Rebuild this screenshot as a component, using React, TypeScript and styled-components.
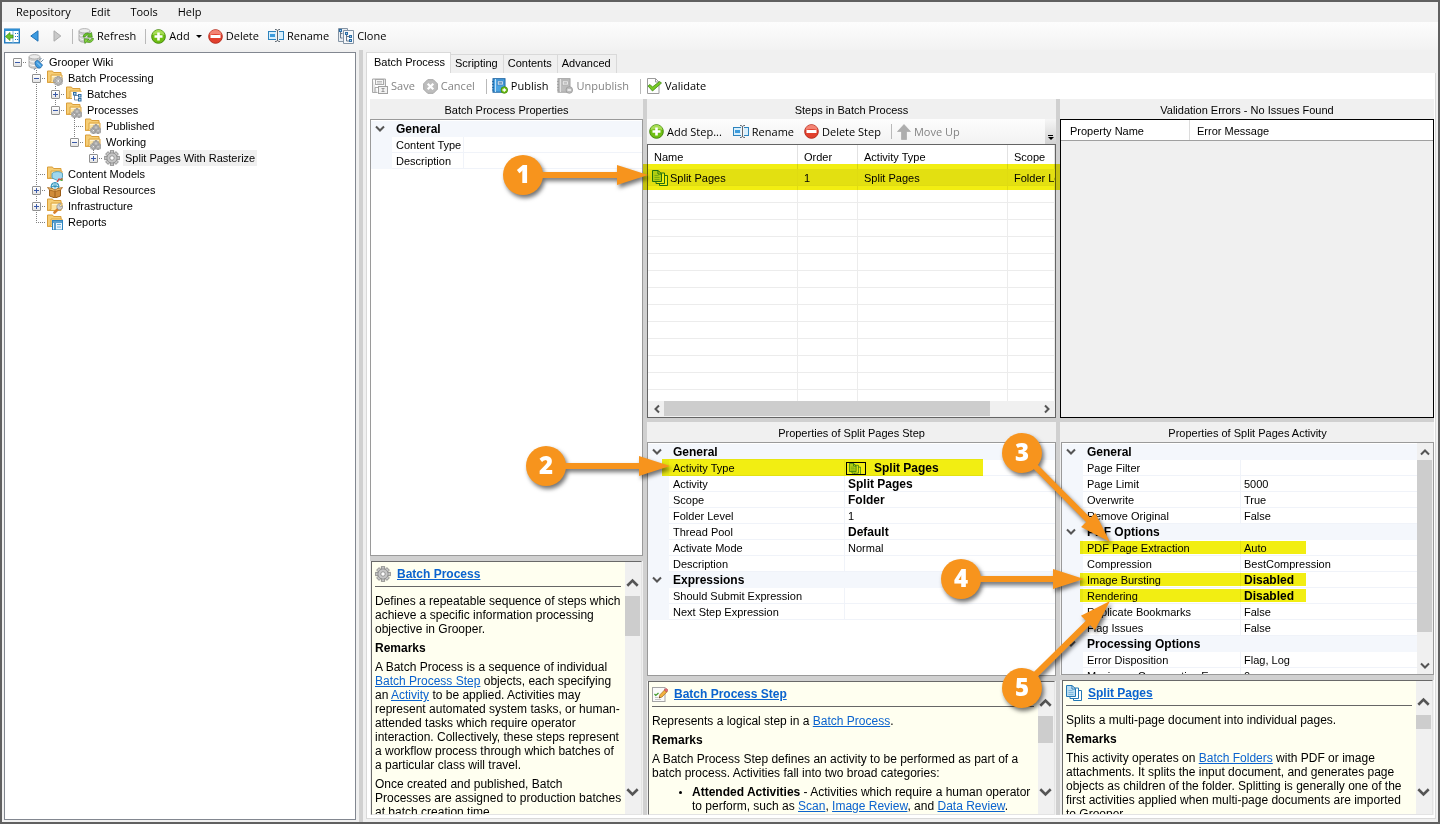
import React from 'react';
import styled, { createGlobalStyle, css } from 'styled-components';

const UI = '"Liberation Sans", Arial, sans-serif';
const MENU = '"Open Sans", "Segoe UI", sans-serif';
const ACCENT = '#f7941d';

const GlobalStyle = createGlobalStyle`
  *, *::before, *::after { box-sizing: border-box; }
  body { margin: 0; background: #f0f0f0; font: 11px/16px ${UI}; color: #000; }
  button { margin: 0; padding: 0; border: 0; background: none; font: inherit; color: inherit; }
  table { border-collapse: separate; border-spacing: 0; table-layout: fixed; width: 100%; }
  th, td { padding: 0; font-weight: normal; text-align: left; white-space: nowrap; overflow: hidden; }
  svg { display: block; flex: none; }
`;

/* ---------- window frame ---------- */

const Window = styled.div`
  position: relative;
  display: flex;
  flex-direction: column;
  height: 100vh;
  min-height: 600px;
  border: 2px solid #606060;
  background: #f0f0f0;
  overflow: hidden;
`;

const MenuBar = styled.nav`
  display: flex;
  flex: none;
  height: 20px;
  padding-left: 4px;
  font: 11px/18px ${MENU};
`;

const MenuItem = styled.button`
  padding: 0 10px;
`;

const ToolBar = styled.div<{ $height: number; $flat?: boolean }>`
  display: flex;
  align-items: center;
  flex: none;
  height: ${(p) => p.$height}px;
  padding-left: 2px;
  background: ${(p) => (p.$flat ? '#fff' : 'linear-gradient(#fdfdfd, #f2f2f2)')};
  font: 11px/16px ${MENU};
  white-space: nowrap;
`;

const ToolButton = styled.button<{ $gap?: number }>`
  display: flex;
  align-items: center;
  gap: 3px;
  margin-right: ${(p) => p.$gap ?? 9}px;
  &:disabled { color: #838383; }
`;

const Divider = styled.i`
  width: 1px;
  height: 15px;
  margin-right: 5px;
  background: #b9b9b9;
`;

const Caret = styled.i`
  border: 3px solid transparent;
  border-top-color: #000;
  border-bottom: 0;
  margin-left: 3px;
`;

const Workspace = styled.div`
  display: flex;
  flex: 1;
  min-height: 0;
`;

/* ---------- node tree ---------- */

const TreePane = styled.div`
  flex: none;
  width: 352px;
  margin: 2px 3px 2px 2px;
  padding: 1px 0 0 3px;
  border: 1px solid #828790;
  background: #fff;
`;

const TreeRow = styled.div`
  display: flex;
  align-items: center;
  height: 16px;
  > svg { margin-left: 1px; }
`;

type Guide = 'none' | 'line' | 'tee' | 'end' | 'root';

const dotsV = 'repeating-linear-gradient(#808080 0 1px, transparent 1px 2px)';
const dotsH = 'repeating-linear-gradient(90deg, #808080 0 1px, transparent 1px 2px)';

const GuideCell = styled.span<{ $kind: Guide }>`
  display: grid;
  place-items: center;
  flex: none;
  width: 19px;
  height: 16px;
  background-repeat: no-repeat;
  ${(p) => p.$kind === 'line' && css`background-image: ${dotsV}; background-position: 9px 0; background-size: 1px 16px;`}
  ${(p) => p.$kind === 'tee' && css`background-image: ${dotsV}, ${dotsH}; background-position: 9px 0, 9px 8px; background-size: 1px 16px, 10px 1px;`}
  ${(p) => p.$kind === 'end' && css`background-image: ${dotsV}, ${dotsH}; background-position: 9px 0, 9px 8px; background-size: 1px 8px, 10px 1px;`}
  ${(p) => p.$kind === 'root' && css`background-image: ${dotsH}; background-position: 9px 8px; background-size: 10px 1px;`}
`;

const Expander = styled.button<{ $open: boolean }>`
  width: 9px;
  height: 9px;
  border: 1px solid #919191;
  border-radius: 1px;
  background:
    linear-gradient(#3b5aa8, #3b5aa8) center / 5px 1px no-repeat,
    linear-gradient(#3b5aa8, #3b5aa8) center / 1px ${(p) => (p.$open ? 0 : 5)}px no-repeat,
    linear-gradient(#fff, #e4e4e4);
`;

const TreeLabel = styled.span<{ $selected?: boolean }>`
  margin-left: 3px;
  padding: 0 2px;
  background: ${(p) => (p.$selected ? '#f0f0f0' : 'transparent')};
`;

/* ---------- tabs and panes ---------- */

const Splitter = styled.div`
  flex: none;
  width: 4px;
  background: #d0d0d0;
`;

const Editor = styled.div`
  display: flex;
  flex-direction: column;
  flex: 1;
  min-width: 0;
  margin: 2px 2px 3px 3px;
`;

const TabStrip = styled.div`
  display: flex;
  flex: none;
  align-items: flex-end;
  height: 21px;
`;

const Tab = styled.button<{ $active?: boolean }>`
  height: ${(p) => (p.$active ? 21 : 19)}px;
  padding: ${(p) => (p.$active ? '0 5px 2px 7px' : '0 5px 2px 4px')};
  border: 1px solid #d9d9d9;
  border-bottom: 0;
  border-left-width: ${(p) => (p.$active ? 1 : 0)}px;
  background: ${(p) => (p.$active ? '#fff' : '#f0f0f0')};
`;

const TabPage = styled.div`
  display: flex;
  flex-direction: column;
  flex: 1;
  min-height: 0;
  padding: 0 1px 3px 3px;
  border: 1px solid #d9d9d9;
  border-top: 0;
  background: #fff;
`;

const Columns = styled.div`
  display: grid;
  grid-template-columns: minmax(0, 273fr) 4px minmax(0, 409fr) 4px minmax(0, 374fr);
  flex: 1;
  min-height: 0;
`;

const Column = styled.div<{ $rows: string }>`
  display: grid;
  grid-template-rows: ${(p) => p.$rows};
  min-height: 0;
  background: #f0f0f0;
`;

const Bar = styled.div`
  background: #d0d0d0;
`;

const Pane = styled.section<{ $inset?: number }>`
  display: flex;
  flex-direction: column;
  min-height: 0;
  min-width: 0;
  overflow: hidden;
  padding-left: ${(p) => p.$inset ?? 0}px;
`;

const PaneTitle = styled.h2`
  flex: none;
  height: 20px;
  margin: 0;
  font: 11px/22px ${UI};
  text-align: center;
`;

/* ---------- property grid ---------- */

const GridBox = styled.div`
  display: flex;
  flex: 1;
  min-height: 0;
  border: 1px solid #9a9a9a;
  background: #fff;
`;

const GridScroll = styled.div<{ $top?: number }>`
  flex: 1;
  min-width: 0;
  overflow: hidden;
  padding-top: ${(p) => p.$top ?? 0}px;
`;

const GutterCell = styled.td`
  height: 16px;
  background: #f4f7fc;
`;

const SectionCell = styled.th`
  && { font-weight: bold; }
  height: 16px;
  padding: 1px 0 0 4px;
  background: #f4f7fc;
  font-size: 12px;
  line-height: 15px;
`;

const NameCell = styled.th`
  height: 16px;
  padding: 1px 0 0 4px;
  line-height: 15px;
  box-shadow: inset -1px -1px #f0f3f9;
`;

const ValueCell = styled.td<{ $strong?: boolean; $swatch?: boolean }>`
  height: 16px;
  padding: 1px 0 0 ${(p) => (p.$swatch ? 1 : 3)}px;
  line-height: 15px;
  box-shadow: inset 0 -1px #f0f3f9;
  ${(p) => p.$strong && css`font-weight: bold; font-size: 12px;`}
`;

const Swatched = styled.span`
  display: flex;
  align-items: center;
  gap: 8px;
  height: 15px;
`;

const Swatch = styled.span`
  display: grid;
  place-items: center;
  width: 20px;
  height: 13px;
  border: 1px solid #000;
  overflow: hidden;
`;

const Chevron = styled.button`
  display: grid;
  place-items: center;
  width: 18px;
  height: 16px;
`;

/* ---------- steps list and error list ---------- */

const ListBox = styled.div`
  display: flex;
  flex-direction: column;
  flex: 1;
  min-height: 0;
  border: 1px solid #646464;
  background: #fff;
`;

const ListHead = styled.th`
  height: 24px;
  padding-left: 6px;
  border-right: 1px solid #e2e2e2;
`;

const ListCell = styled.td<{ $selected?: boolean }>`
  height: 17px;
  padding: 1px 0 0 6px;
  line-height: 16px;
  box-shadow: inset -1px -1px #ececec;
  background: ${(p) => (p.$selected ? '#f0f0f0' : '#fff')};
`;

const StepName = styled.span`
  display: flex;
  align-items: center;
  gap: 2px;
  margin-left: -2px;
  height: 16px;
`;

const ErrorBox = styled.div`
  flex: 1;
  border: 1px solid #000;
  background: #f0f0f0;
`;

const ErrorHead = styled.th`
  height: 21px;
  padding: 1px 0 0 9px;
  border-bottom: 1px solid #a0a0a0;
  background: #fff;
  & + & { padding-left: 8px; box-shadow: inset 1px 0 #dcdcdc; }
`;

const Overflow = styled.button`
  display: flex;
  flex-direction: column;
  align-items: center;
  justify-content: flex-end;
  gap: 1px;
  align-self: stretch;
  width: 11px;
  margin-left: auto;
  padding-bottom: 4px;
  background: linear-gradient(#f6f6f6, #d2d2d2);
  &::before { content: ''; width: 5px; height: 1px; background: #000; }
  &::after { content: ''; border: 3px solid transparent; border-top-color: #000; border-bottom: 0; }
`;

/* ---------- scroll bars ---------- */

const VTrack = styled.div<{ $help?: boolean }>`
  display: flex;
  flex-direction: column;
  flex: none;
  width: 16px;
  padding: ${(p) => (p.$help ? '12px 1px 14px 0' : '1px 1px 0 0')};
  background: #f0f0f0;
`;

const HTrack = styled.div`
  display: flex;
  flex: none;
  height: 16px;
  padding: 0 1px 1px;
  background: #f0f0f0;
`;

const ArrowButton = styled.button`
  display: grid;
  place-items: center;
  flex: none;
  min-width: 15px;
  height: 16px;
`;

const Slide = styled.div<{ $row?: boolean; $help?: boolean }>`
  display: flex;
  flex-direction: ${(p) => (p.$row ? 'row' : 'column')};
  flex: 1;
  min-height: 0;
  padding: ${(p) => (p.$help ? '6px 0' : '0')};
`;

const Thumb = styled.div<{ $share: number }>`
  flex: 0 0 ${(p) => p.$share}%;
  background: #cdcdcd;
`;

/* ---------- help panes ---------- */

const HelpBox = styled.div`
  display: flex;
  flex: 1;
  min-height: 0;
  margin: 0 1px;
  border: 1px solid #e3e3e3;
  border-top-color: #696969;
  border-left-color: #696969;
  background: #fffff0;
`;

const HelpText = styled.div`
  flex: 1;
  min-width: 0;
  overflow: hidden;
  padding: 0 3px;
  font: 12px/14px ${UI};
  p { margin: 0 0 5px; }
  ul { margin: 0; padding-left: 40px; }
  li::marker { font-size: 10px; }
`;

const HelpHead = styled.header`
  display: flex;
  align-items: center;
  gap: 6px;
  height: 25px;
  margin: 0 1px 7px 0;
  border-bottom: 1px solid #666;
  font-weight: bold;
`;

const Link = styled.a`
  color: #0b63ce;
  text-decoration: underline;
`;

/* ---------- callouts ---------- */

const Marker = styled.div<{ $x: number; $y: number; $w: number; $h: number }>`
  position: absolute;
  left: ${(p) => p.$x}px;
  top: ${(p) => p.$y}px;
  width: ${(p) => p.$w}px;
  height: ${(p) => p.$h}px;
  background: #f2ee12;
  mix-blend-mode: multiply;
  pointer-events: none;
`;

const Arrows = styled.svg`
  position: absolute;
  left: 0;
  top: 0;
  pointer-events: none;
  filter: drop-shadow(2px 3px 2px rgba(0, 0, 0, 0.55));
`;

const Badge = styled.span<{ $x: number; $y: number }>`
  position: absolute;
  left: ${(p) => p.$x - 20}px;
  top: ${(p) => p.$y - 20}px;
  width: 40px;
  height: 40px;
  border-radius: 50%;
  color: #fff;
  font: 800 24px/38px "Open Sans", sans-serif;
  text-align: center;
`;

/* ---------- icons ---------- */

const Svg = ({ children, w = 16, h = 16 }: { children: React.ReactNode; w?: number; h?: number }) => (
  <svg width={w} height={h} viewBox={`0 0 ${w} ${h}`} fill="none" aria-hidden="true">{children}</svg>
);

const Cog = ({ cx, cy, r, fill = '#c2c2c2', stroke = '#969696' }: { cx: number; cy: number; r: number; fill?: string; stroke?: string }) => (
  <g>
    {[0, 45, 90, 135].map((a) => (
      <rect key={a} x={cx - r * 0.24} y={cy - r} width={r * 0.48} height={r * 2} fill={fill} stroke={stroke} strokeWidth="0.7" transform={`rotate(${a} ${cx} ${cy})`} />
    ))}
    <circle cx={cx} cy={cy} r={r * 0.7} fill={fill} stroke={stroke} strokeWidth="0.6" />
    <circle cx={cx} cy={cy} r={r * 0.3} fill="#fff" stroke={stroke} strokeWidth="0.7" />
  </g>
);

const CogIcon = () => <Svg><Cog cx={8} cy={8} r={7.3} fill="#c6c6c6" stroke="#777" /></Svg>;

const FolderShape = () => (
  <g>
    <path d="M.5 12.500v-11.500h5l1 1.500h7.500v10z" fill="#f6cd74" stroke="#d99e3a" />
    <path d="M.8 12.500l3.200-1V5h11v5.500l-2 2z" fill="#fde3a0" stroke="#dda645" />
    <path d="M5 6.500h9" stroke="#fff3cf" />
  </g>
);

const FolderCog = () => <Svg><FolderShape /><Cog cx={11.2} cy={11} r={4.6} /></Svg>;
const FolderCogs = () => (
  <Svg><FolderShape /><Cog cx={8.500} cy={12.500} r={3.2} /><Cog cx={13} cy={12.500} r={3.200} /><Cog cx={11} cy={9.500} r={3} /></Svg>
);
const FolderBatches = () => (
  <Svg>
    <FolderShape />
    <rect x="6" y="6" width="10" height="10" fill="#fff" />
    <path d="M8.500 8v6h4M8.500 9.500h4" stroke="#7a8fa8" />
    <rect x="7.500" y="6.500" width="2.500" height="2.500" fill="#bfe0f5" stroke="#2f6ea5" />
    <rect x="12.500" y="8.500" width="2.500" height="2.500" fill="#bfe0f5" stroke="#2f6ea5" />
    <rect x="12.500" y="12.500" width="2.500" height="2.500" fill="#bfe0f5" stroke="#2f6ea5" />
  </Svg>
);
const FolderModels = () => (
  <Svg>
    <FolderShape />
    <path d="M5 7.500c3-2.500 8-2.500 10.500 0v4l-4 3.500-6.500-3z" fill="#9fd7ef" stroke="#3d93b8" strokeWidth=".8" />
    <path d="M10 16l2-3 3 1v-2" stroke="#df3d32" strokeWidth="1.200" />
    <path d="M13 15l2.500-3v3z" fill="#53b545" />
  </Svg>
);
const FolderWrench = () => (
  <Svg>
    <FolderShape />
    <path d="M7.500 14.500l4.500-4.500" stroke="#d9822b" strokeWidth="2.600" strokeLinecap="round" />
    <path d="M10 10c-.6-3 1.500-5 4-4.300l-1.700 1.800 1 1.300 2.400-1c.3 2.700-2 4.500-4.200 4z" fill="#d2d2d2" stroke="#8a8a8a" strokeWidth=".7" />
  </Svg>
);
const FolderReports = () => (
  <Svg>
    <FolderShape />
    <rect x="5.500" y="6.500" width="10" height="9.500" fill="#e8f5fd" stroke="#2d83bd" />
    <path d="M6 8h9M8 9v7" stroke="#2d83bd" strokeWidth="1.500" />
    <path d="M10 10.500h4M10 13h4" stroke="#6aaeda" />
  </Svg>
);
const ResourcesIcon = () => (
  <Svg>
    <circle cx="8" cy="4.500" r="4" fill="#c9ebf7" stroke="#2b8db5" />
    <path d="M4 4.500h8M8 .5v6M5.500 2c2 3 3 3 5 0" stroke="#2b8db5" strokeWidth=".8" />
    <path d="M2.500 8h11v6l-5.500 2-5.500-2z" fill="#d08c3a" stroke="#9a5c18" />
    <path d="M2.500 8L.5 5.500 6 6.500l2 2 2-2 5.500-1-2 2.500L8 9.500z" fill="#edb868" stroke="#a6661d" strokeWidth=".8" />
    <path d="M8 9.500V16" stroke="#9a5c18" />
  </Svg>
);
const Cylinder = () => (
  <g>
    <path d="M1 3v9c0 3 11 3 11 0V3" fill="#cfcfcf" stroke="#9a9a9a" strokeWidth=".8" />
    <path d="M1.500 6.500c1.500 2 8.500 2 10 0M1.500 10c1.500 2 8.500 2 10 0" stroke="#fff" />
    <ellipse cx="6.500" cy="2.800" rx="5.500" ry="2.200" fill="#ececec" stroke="#a5a5a5" strokeWidth=".8" />
  </g>
);
const RepositoryIcon = () => (
  <Svg>
    <Cylinder />
    <path d="M7 8l2.500-2 5 5-1.500 2.500c-3 2-6-1-6-5.500z" fill="#3e9be0" stroke="#1d62a5" strokeWidth=".8" />
    <path d="M13 8l2.500-2.500M11 6.500l2.500-2.500M7.500 14L6 16" stroke="#6b88a5" />
    <path d="M9 8.500l4 4" stroke="#a8d6f7" />
  </Svg>
);
const RefreshIcon = () => (
  <Svg>
    <Cylinder />
    <path d="M5 9c.5-3.500 4-5 7-3l1.500-1.500.8 4.800-4.800-.3 1.400-1.400C9 6.500 7.500 7.500 7 9z" fill="#6cc32c" stroke="#3c8a12" strokeWidth=".7" />
    <path d="M15.500 10.500c-.5 3.500-4 5-7 3.300L7 15.500 6 10.800l5 .2-1.500 1.500c2 1 3.500 0 4-2z" fill="#84d23e" stroke="#3c8a12" strokeWidth=".7" />
  </Svg>
);
const HomePaneIcon = () => (
  <Svg>
    <rect x=".7" y="1.200" width="14.600" height="13.600" fill="#fff" stroke="#1f7ac0" strokeWidth="1.400" />
    <path d="M0 2h16" stroke="#2f8fd4" strokeWidth="2" />
    <path d="M9 3v12" stroke="#7fb6dc" />
    <path d="M1.500 8.500L6 4.500v2.500h3v3H6v2.500z" fill="#6cc52b" stroke="#3c8a12" strokeWidth=".7" />
    <path d="M11 5.500h3M11 8.500h3M11 11.500h3" stroke="#1f7ac0" strokeDasharray="1 1" />
  </Svg>
);
const BackIcon = () => <Svg w={9} h={12}><path d="M8 .8v10.400L.8 6z" fill="#3c9be2" stroke="#2373b5" /></Svg>;
const ForwardIcon = () => <Svg w={9} h={12}><path d="M1 .8v10.400L7.800 6z" fill="#c9c9c9" stroke="#ababab" /></Svg>;
const AddIcon = () => (
  <Svg w={15} h={15}>
    <circle cx="7.500" cy="7.500" r="6.800" fill="#6fbf12" stroke="#43890b" />
    <path d="M1.500 6a6 5 0 0 1 12 0c-4-1.500-8-1.500-12 0z" fill="#a7dd55" />
    <path d="M7.500 3.500v8M3.500 7.500h8" stroke="#fff" strokeWidth="2.600" />
  </Svg>
);
const DeleteIcon = () => (
  <Svg w={15} h={15}>
    <circle cx="7.500" cy="7.500" r="6.800" fill="#e2402d" stroke="#b62c1e" />
    <path d="M1.500 6a6 5 0 0 1 12 0c-4-1.500-8-1.500-12 0z" fill="#f38474" />
    <rect x="2.500" y="6" width="10" height="3" fill="#fff" />
  </Svg>
);
const RenameIcon = () => (
  <Svg>
    <rect x=".5" y="3.500" width="15" height="8" fill="#d8effc" stroke="#2d83bd" />
    <rect x="2" y="6" width="5" height="3" fill="#3d9bdc" />
    <rect x="8" y="3" width="3" height="9" fill="#f4f4f4" />
    <path d="M7 1.500c1.500 0 2.500.3 2.500 1.500 0-1.200 1-1.500 2.500-1.500M9.500 3v9.500M7 13.500c1.500 0 2.500-.3 2.500-1.500 0 1.200 1 1.500 2.500 1.500" stroke="#5c6670" />
  </Svg>
);
const CloneIcon = () => (
  <Svg>
    <path d="M.5.500h9v13h-9z" fill="#e8edf2" stroke="#8494a5" />
    <path d="M5.500 2.500h10v13h-10z" fill="#f7f9fb" stroke="#8494a5" />
    <path d="M2.500 2v8h2M2.500 5.500h2M8.500 5v8h3M8.500 8.500h3" stroke="#66788c" />
    <rect x="1.500" y="1.500" width="2" height="2" fill="#9ecff0" stroke="#2f6ea5" />
    <rect x="7.500" y="4.500" width="2" height="2" fill="#9ecff0" stroke="#2f6ea5" />
    <rect x="11.500" y="7.500" width="2" height="2" fill="#9ecff0" stroke="#2f6ea5" />
    <rect x="11.500" y="11.500" width="2" height="2" fill="#9ecff0" stroke="#2f6ea5" />
  </Svg>
);
const SaveIcon = () => (
  <Svg>
    <path d="M.5 1h13v7M.5 1v13.500h5" stroke="#a9a9a9" fill="#e9e9e9" />
    <rect x="3.500" y="1.500" width="8" height="5" fill="#f7f7f7" stroke="#a9a9a9" />
    <path d="M5 3.500h5M5 5h5" stroke="#bcbcbc" />
    <path d="M3 14V9.500h4" stroke="#a9a9a9" />
    <rect x="6.500" y="8.500" width="9" height="7" fill="#f2f2f2" stroke="#a0a0a0" />
    <path d="M9.500 10.500h3M11 10.500v3M9.500 13.500h3" stroke="#999" />
  </Svg>
);
const CancelIcon = () => (
  <Svg w={15} h={15}>
    <path d="M4.700.7h5.600l4 4v5.600l-4 4H4.700l-4-4V4.700z" fill="#bdbdbd" stroke="#a6a6a6" />
    <path d="M4.700 4.700l5.600 5.600M10.300 4.700l-5.600 5.600" stroke="#fff" strokeWidth="2.200" />
  </Svg>
);
const BookIcon = ({ off }: { off?: boolean }) => (
  <Svg>
    <rect x="1" y=".7" width="12" height="13.500" fill={off ? '#bdbdbd' : '#4ba3e2'} stroke={off ? '#a0a0a0' : '#1c62a0'} />
    <path d="M3.500 1v13" stroke={off ? '#e4e4e4' : '#bfe0f8'} />
    <rect x="5.500" y="3" width="5.500" height="4" fill="#fff" stroke={off ? '#a8a8a8' : '#2f77b8'} strokeWidth=".6" />
    <path d="M6.500 4.300h3.500M6.500 5.800h3.500M0 3.500h2M0 6.500h2M0 9.500h2M0 12h2" stroke={off ? '#9d9d9d' : '#1c62a0'} strokeWidth=".8" />
    <circle cx="12.300" cy="12" r="3.300" fill={off ? '#bcbcbc' : '#6fbf12'} stroke={off ? '#9b9b9b' : '#43890b'} strokeWidth=".8" />
    <path d={off ? 'M10.500 12h3.600' : 'M10.500 12h3.600M12.300 10.200v3.600'} stroke="#fff" strokeWidth="1.300" />
  </Svg>
);
const ValidateIcon = () => (
  <Svg>
    <path d="M1.500.5h8l3.500 3.500v11.500H1.500z" fill="#fdfdfd" stroke="#9c9c9c" />
    <path d="M9.500.5V4H13" stroke="#9c9c9c" />
    <path d="M2 8l2-1.500L6.500 9l7-5.500L15.500 5l-9 8z" fill="#77c923" stroke="#3c8a12" strokeWidth=".8" />
  </Svg>
);
const UpIcon = () => <Svg w={14} h={16}><path d="M7 .5l6.500 7h-4v8h-5v-8h-4z" fill="#adadad" stroke="#a2a2a2" strokeWidth=".6" /></Svg>;
const PagesIcon = () => (
  <Svg>
    <path d="M7.500 5.500h8v10h-8z" fill="#fff" stroke="#2378b4" />
    <path d="M4 3h8.500v10.500h-8.500z" fill="#fff" stroke="#2378b4" />
    <path d="M.5.500H6l3.500 3.500v7.500h-9z" fill="#b9dcf1" stroke="#2378b4" />
    <path d="M6 .5V4h3.500z" fill="#fff" stroke="#2378b4" />
    <path d="M2.500 5.500h4M2.500 7.500h5M2.500 9.500h5" stroke="#7fb8dd" />
  </Svg>
);
const StepIcon = () => (
  <Svg>
    <rect x=".5" y="1.500" width="12.500" height="14" fill="#fafafa" stroke="#a5a5a5" />
    <path d="M2.500 8l1.300 1.500L6.500 7" stroke="#3d9a27" strokeWidth="1.200" />
    <path d="M3 11.500h3M3 13.500h6" stroke="#c4c4c4" />
    <path d="M7 12l1-3.300 5-5.200 2.300 2-5.300 5.500z" fill="#f2b13d" stroke="#a66d18" strokeWidth=".7" />
    <path d="M12.300 4l1.300-1.300c.8-.5 2.700 1 2 2l-1.200 1.200z" fill="#e66f78" stroke="#a83c46" strokeWidth=".6" />
    <path d="M7 12l.5-1.500 1 1z" fill="#333" />
  </Svg>
);

type Dir = 'up' | 'down' | 'left' | 'right';
const arrowPath: Record<Dir, string> = {
  up: 'M1 7.500L5 3.500l4 4', down: 'M1 2.500l4 4 4-4', left: 'M7 1.500L3.500 5 7 8.500', right: 'M3 1.500L6.500 5 3 8.500',
};
const Arrow = ({ dir, size = 10 }: { dir: Dir; size?: number }) => (
  <svg width={size} height={size} viewBox="0 0 10 10" fill="none" aria-hidden="true">
    <path d={arrowPath[dir]} stroke="#555" strokeWidth="2" />
  </svg>
);

/* ---------- data ---------- */

interface TreeNode { label: string; guides: Guide[]; icon: React.ReactNode; open?: boolean; selected?: boolean }

const nodes: TreeNode[] = [
  { label: 'Grooper Wiki', guides: ['root'], icon: <RepositoryIcon />, open: true },
  { label: 'Batch Processing', guides: ['none', 'tee'], icon: <FolderCog />, open: true },
  { label: 'Batches', guides: ['none', 'line', 'tee'], icon: <FolderBatches />, open: false },
  { label: 'Processes', guides: ['none', 'line', 'end'], icon: <FolderCogs />, open: true },
  { label: 'Published', guides: ['none', 'line', 'none', 'tee'], icon: <FolderCogs /> },
  { label: 'Working', guides: ['none', 'line', 'none', 'end'], icon: <FolderCogs />, open: true },
  { label: 'Split Pages With Rasterize', guides: ['none', 'line', 'none', 'none', 'end'], icon: <CogIcon />, open: false, selected: true },
  { label: 'Content Models', guides: ['none', 'tee'], icon: <FolderModels /> },
  { label: 'Global Resources', guides: ['none', 'tee'], icon: <ResourcesIcon />, open: false },
  { label: 'Infrastructure', guides: ['none', 'tee'], icon: <FolderWrench />, open: false },
  { label: 'Reports', guides: ['none', 'end'], icon: <FolderReports /> },
];

interface Prop { name: string; value?: string; strong?: boolean; swatch?: boolean }
interface Section { title: string; props: Prop[] }

const processProps: Section[] = [
  { title: 'General', props: [{ name: 'Content Type' }, { name: 'Description' }] },
];

const stepProps: Section[] = [
  {
    title: 'General',
    props: [
      { name: 'Activity Type', value: 'Split Pages', strong: true, swatch: true },
      { name: 'Activity', value: 'Split Pages', strong: true },
      { name: 'Scope', value: 'Folder', strong: true },
      { name: 'Folder Level', value: '1' },
      { name: 'Thread Pool', value: 'Default', strong: true },
      { name: 'Activate Mode', value: 'Normal' },
      { name: 'Description' },
    ],
  },
  { title: 'Expressions', props: [{ name: 'Should Submit Expression' }, { name: 'Next Step Expression' }] },
];

const activityProps: Section[] = [
  {
    title: 'General',
    props: [
      { name: 'Page Filter' },
      { name: 'Page Limit', value: '5000' },
      { name: 'Overwrite', value: 'True' },
      { name: 'Remove Original', value: 'False' },
    ],
  },
  {
    title: 'PDF Options',
    props: [
      { name: 'PDF Page Extraction', value: 'Auto' },
      { name: 'Compression', value: 'BestCompression' },
      { name: 'Image Bursting', value: 'Disabled', strong: true },
      { name: 'Rendering', value: 'Disabled', strong: true },
      { name: 'Replicate Bookmarks', value: 'False' },
      { name: 'Flag Issues', value: 'False' },
    ],
  },
  {
    title: 'Processing Options',
    props: [
      { name: 'Error Disposition', value: 'Flag, Log' },
      { name: 'Maximum Consecutive Errors', value: '0' },
    ],
  },
];

/* ---------- parts ---------- */

const PropertyGrid = ({ sections, nameWidth }: { sections: Section[]; nameWidth: number }) => (
  <GridScroll $top={1}>
    <table>
      <colgroup><col width={21} /><col width={nameWidth} /><col /></colgroup>
      <tbody>
        {sections.map((s) => (
          <React.Fragment key={s.title}>
            <tr>
              <GutterCell><Chevron aria-label={`Collapse ${s.title}`}><Arrow dir="down" /></Chevron></GutterCell>
              <SectionCell colSpan={2}>{s.title}</SectionCell>
            </tr>
            {s.props.map((p) => (
              <tr key={p.name}>
                <GutterCell />
                <NameCell scope="row">{p.name}</NameCell>
                <ValueCell $strong={p.strong} $swatch={p.swatch}>
                  {p.swatch ? <Swatched><Swatch><Svg w={14} h={12}><g transform="scale(.75)"><PagesIcon /></g></Svg></Swatch>{p.value}</Swatched> : p.value}
                </ValueCell>
              </tr>
            ))}
          </React.Fragment>
        ))}
      </tbody>
    </table>
  </GridScroll>
);

const VScroll = ({ share, help }: { share: number; help?: boolean }) => (
  <VTrack $help={help}>
    <ArrowButton aria-label="Scroll up"><Arrow dir="up" size={help ? 13 : 10} /></ArrowButton>
    <Slide $help={help}><Thumb $share={share} /></Slide>
    <ArrowButton aria-label="Scroll down"><Arrow dir="down" size={help ? 13 : 10} /></ArrowButton>
  </VTrack>
);

const Help = ({ icon, title, share, children }: { icon: React.ReactNode; title: string; share: number; children: React.ReactNode }) => (
  <HelpBox>
    <HelpText>
      <HelpHead>{icon}<Link href="#">{title}</Link></HelpHead>
      {children}
    </HelpText>
    <VScroll share={share} help />
  </HelpBox>
);

const Pointer = ({ from, to }: { from: [number, number]; to: [number, number] }) => {
  const length = Math.hypot(to[0] - from[0], to[1] - from[1]);
  const angle = (Math.atan2(to[1] - from[1], to[0] - from[0]) * 180) / Math.PI;
  return (
    <g transform={`translate(${from[0]} ${from[1]}) rotate(${angle})`} fill={ACCENT}>
      <circle r="20" />
      <path d={`M0-3H${length - 31}V-10L${length} 0L${length - 31} 10V3H0z`} />
    </g>
  );
};

const callouts: { from: [number, number]; to: [number, number] }[] = [
  { from: [521, 173], to: [646, 173] },
  { from: [544, 464], to: [668, 464] },
  { from: [1020, 451], to: [1108, 540] },
  { from: [959, 577], to: [1082, 577] },
  { from: [1020, 686], to: [1108, 599] },
];

const blankRows = Array.from({ length: 13 }, (_, i) => i);

export default function App() {
  return (
    <Window>
      <GlobalStyle />
      <MenuBar>
        {['Repository', 'Edit', 'Tools', 'Help'].map((m) => <MenuItem key={m}>{m}</MenuItem>)}
      </MenuBar>
      <ToolBar $height={28}>
        <ToolButton $gap={10} aria-label="Toggle tree"><HomePaneIcon /></ToolButton>
        <ToolButton $gap={14} aria-label="Back"><BackIcon /></ToolButton>
        <ToolButton $gap={10} aria-label="Forward"><ForwardIcon /></ToolButton>
        <Divider />
        <ToolButton><RefreshIcon />Refresh</ToolButton>
        <Divider />
        <ToolButton $gap={6}><AddIcon />Add<Caret /></ToolButton>
        <ToolButton><DeleteIcon />Delete</ToolButton>
        <ToolButton><RenameIcon />Rename</ToolButton>
        <ToolButton><CloneIcon />Clone</ToolButton>
      </ToolBar>
      <Workspace>
        <TreePane role="tree">
          {nodes.map((n) => (
            <TreeRow key={n.label} role="treeitem">
              {n.guides.map((g, i) => (
                <GuideCell key={i} $kind={g}>
                  {i === n.guides.length - 1 && n.open !== undefined && (
                    <Expander $open={n.open} aria-label={n.open ? 'Collapse' : 'Expand'} />
                  )}
                </GuideCell>
              ))}
              {n.icon}
              <TreeLabel $selected={n.selected}>{n.label}</TreeLabel>
            </TreeRow>
          ))}
        </TreePane>
        <Splitter />
        <Editor>
          <TabStrip role="tablist">
            <Tab role="tab" $active>Batch Process</Tab>
            <Tab role="tab">Scripting</Tab>
            <Tab role="tab">Contents</Tab>
            <Tab role="tab">Advanced</Tab>
          </TabStrip>
          <TabPage>
            <ToolBar $height={26} $flat>
              <ToolButton disabled $gap={8}><SaveIcon />Save</ToolButton>
              <ToolButton disabled $gap={11}><CancelIcon />Cancel</ToolButton>
              <Divider />
              <ToolButton><BookIcon />Publish</ToolButton>
              <ToolButton disabled $gap={11}><BookIcon off />Unpublish</ToolButton>
              <Divider />
              <ToolButton><ValidateIcon />Validate</ToolButton>
            </ToolBar>
            <Columns>
              <Column $rows="minmax(0, 457fr) 5px minmax(0, 254fr)">
                <Pane>
                  <PaneTitle>Batch Process Properties</PaneTitle>
                  <GridBox><PropertyGrid sections={processProps} nameWidth={72} /></GridBox>
                </Pane>
                <Bar />
                <Pane>
                  <Help icon={<CogIcon />} title="Batch Process" share={22}>
                    <p>Defines a repeatable sequence of steps which achieve a specific information processing objective in Grooper.</p>
                    <p><b>Remarks</b></p>
                    <p>
                      A Batch Process is a sequence of individual <Link href="#">Batch Process Step</Link> objects, each specifying
                      an <Link href="#">Activity</Link> to be applied. Activities may represent automated system tasks, or human-attended
                      tasks which require operator interaction. Collectively, these steps represent a workflow process through
                      which batches of a particular class will travel.
                    </p>
                    <p>Once created and published, Batch<br />Processes are assigned to production batches at batch creation time.</p>
                  </Help>
                </Pane>
              </Column>
              <Splitter />
              <Column $rows="minmax(0, 319fr) 4px minmax(0, 254fr) 5px minmax(0, 134fr)">
                <Pane>
                  <PaneTitle>Steps in Batch Process</PaneTitle>
                  <ToolBar $height={25}>
                    <ToolButton $gap={11}><AddIcon />Add Step...</ToolButton>
                    <ToolButton $gap={10}><RenameIcon />Rename</ToolButton>
                    <ToolButton $gap={10}><DeleteIcon />Delete Step</ToolButton>
                    <Divider />
                    <ToolButton disabled><UpIcon />Move Up</ToolButton>
                    <Overflow aria-label="More commands" />
                  </ToolBar>
                  <ListBox>
                    <GridScroll>
                      <table>
                        <colgroup><col width={150} /><col width={60} /><col width={150} /><col /></colgroup>
                        <thead>
                          <tr><ListHead>Name</ListHead><ListHead>Order</ListHead><ListHead>Activity Type</ListHead><ListHead>Scope</ListHead></tr>
                        </thead>
                        <tbody>
                          <tr>
                            <ListCell $selected><StepName><PagesIcon />Split Pages</StepName></ListCell>
                            <ListCell $selected>1</ListCell>
                            <ListCell $selected>Split Pages</ListCell>
                            <ListCell $selected>Folder Level</ListCell>
                          </tr>
                          {blankRows.map((r) => <tr key={r}><ListCell /><ListCell /><ListCell /><ListCell /></tr>)}
                        </tbody>
                      </table>
                    </GridScroll>
                    <HTrack>
                      <ArrowButton aria-label="Scroll left"><Arrow dir="left" /></ArrowButton>
                      <Slide $row><Thumb $share={87} /></Slide>
                      <ArrowButton aria-label="Scroll right"><Arrow dir="right" /></ArrowButton>
                    </HTrack>
                  </ListBox>
                </Pane>
                <Bar />
                <Pane>
                  <PaneTitle>Properties of Split Pages Step</PaneTitle>
                  <GridBox><PropertyGrid sections={stepProps} nameWidth={176} /></GridBox>
                </Pane>
                <Bar />
                <Pane>
                  <Help icon={<StepIcon />} title="Batch Process Step" share={44}>
                    <p>Represents a logical step in a <Link href="#">Batch Process</Link>.</p>
                    <p><b>Remarks</b></p>
                    <p>A Batch Process Step defines an activity to be performed as part of a batch process. Activities fall into two broad categories:</p>
                    <ul>
                      <li>
                        <b>Attended Activities</b> - Activities which require a human operator to perform, such
                        as <Link href="#">Scan</Link>, <Link href="#">Image Review</Link>, and <Link href="#">Data Review</Link>.
                      </li>
                    </ul>
                  </Help>
                </Pane>
              </Column>
              <Splitter />
              <Column $rows="minmax(0, 319fr) 4px minmax(0, 253fr) 5px minmax(0, 135fr)">
                <Pane>
                  <PaneTitle>Validation Errors - No Issues Found</PaneTitle>
                  <ErrorBox>
                    <table>
                      <colgroup><col width={128} /><col /></colgroup>
                      <thead><tr><ErrorHead>Property Name</ErrorHead><ErrorHead>Error Message</ErrorHead></tr></thead>
                    </table>
                  </ErrorBox>
                </Pane>
                <Bar />
                <Pane $inset={1}>
                  <PaneTitle>Properties of Split Pages Activity</PaneTitle>
                  <GridBox>
                    <PropertyGrid sections={activityProps} nameWidth={158} />
                    <VScroll share={87} />
                  </GridBox>
                </Pane>
                <Bar />
                <Pane $inset={1}>
                  <Help icon={<PagesIcon />} title="Split Pages" share={23}>
                    <p>Splits a multi-page document into individual pages.</p>
                    <p><b>Remarks</b></p>
                    <p>
                      This activity operates on <Link href="#">Batch Folders</Link> with PDF or image attachments. It splits the input
                      document, and generates page objects as children of the folder. Splitting is generally one of the first
                      activities applied when multi-page documents are imported to Grooper.
                    </p>
                  </Help>
                </Pane>
              </Column>
            </Columns>
          </TabPage>
        </Editor>
      </Workspace>

      <Marker $x={641} $y={162} $w={417} $h={26} />
      <Marker $x={660} $y={457} $w={321} $h={17} />
      <Marker $x={1078} $y={539} $w={226} $h={13} />
      <Marker $x={1078} $y={571} $w={226} $h={13} />
      <Marker $x={1078} $y={587} $w={226} $h={13} />
      <Arrows width="1200" height="760">
        {callouts.map((c, i) => <Pointer key={i} from={c.from} to={c.to} />)}
      </Arrows>
      {callouts.map((c, i) => <Badge key={i} $x={c.from[0]} $y={c.from[1]}>{i + 1}</Badge>)}
    </Window>
  );
}
